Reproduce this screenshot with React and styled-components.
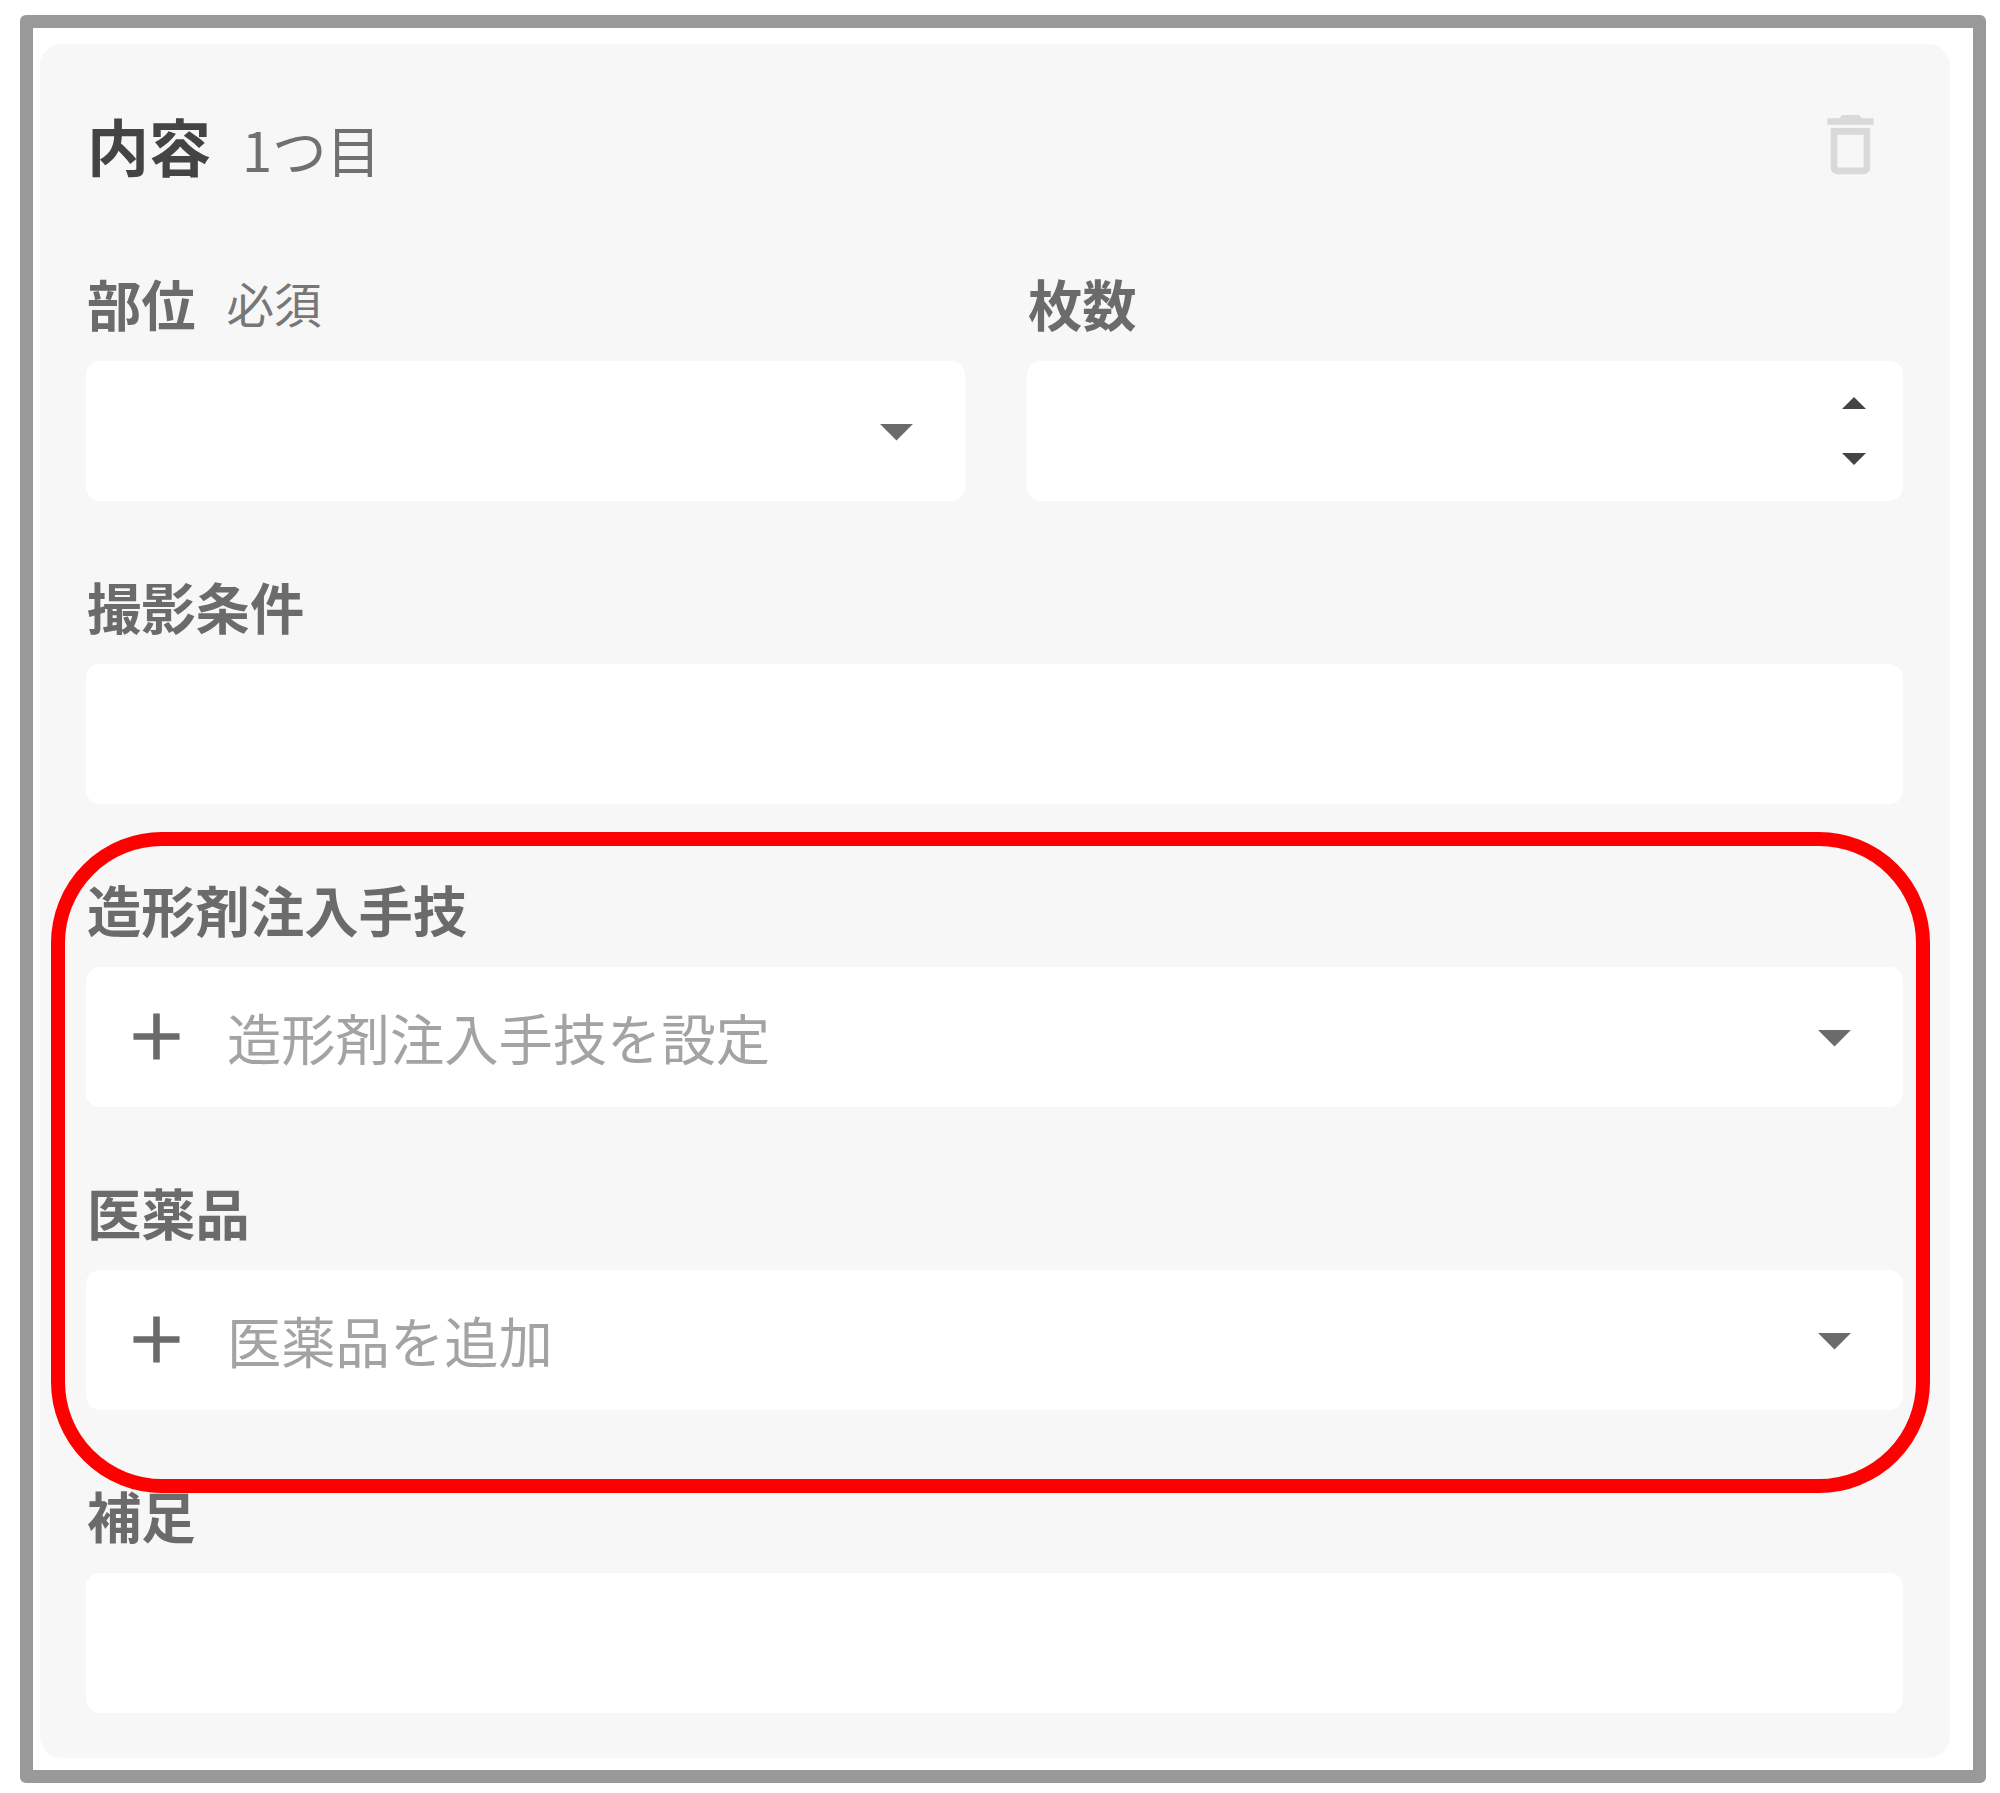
import React from "react";
import styled, { createGlobalStyle } from "styled-components";

const GlobalStyle = createGlobalStyle`
    * {
        box-sizing: border-box;
    }
    body {
        margin: 0;
        background: #fff;
        font-family: "Noto Sans CJK JP", sans-serif;
    }
`;

const Page = styled.main`
    width: 2000px;
    height: 1793px;
    padding: 15px 14px 10px 20px;
    overflow: hidden;
`;

const Frame = styled.div`
    height: 1768px;
    padding: 16px 23px 12px 7px;
    border: 13.5px solid #999;
    border-radius: 6px;
`;

const Card = styled.section`
    position: relative;
    height: 100%;
    padding: 61px 46px 0;
    border-radius: 22px;
    background: #f7f7f7;
`;

const Header = styled.header`
    display: flex;
    justify-content: space-between;
    height: 157.5px;
    padding-right: 14px;
`;

const Heading = styled.div`
    display: flex;
    align-items: baseline;
    gap: 31px;
    height: 81px;
    padding-left: 1px;
    line-height: 81px;
`;

const Title = styled.h2`
    margin: 0;
    color: #444;
    font-size: 62px;
    font-weight: 700;
`;

const Count = styled.span`
    color: #707070;
    font-size: 54.3px;
`;

const Form = styled.div`
    display: grid;
    grid-template-columns: 879px 876px;
    column-gap: 62px;
    row-gap: 65px;
`;

const FieldBox = styled.div`
    grid-column: ${({ $wide }) => ($wide ? "1 / -1" : "auto")};
`;

const Label = styled.div`
    display: flex;
    align-items: center;
    gap: 31px;
    height: 80px;
    margin-bottom: 18.5px;
    padding-left: 1px;
    color: #6b6b6b;
    font-size: 54.3px;
    font-weight: 700;
    line-height: 80px;
`;

const Required = styled.span`
    color: #777;
    font-size: 47.5px;
    font-weight: 400;
`;

const Control = styled.div`
    display: flex;
    align-items: center;
    height: 139.5px;
    padding: 0 29px 0 31px;
    border-radius: 14px;
    background: #fff;
`;

const Placeholder = styled.span`
    flex: 1;
    margin-left: 31px;
    color: #a3a3a3;
    font-size: 54.3px;
    line-height: 80px;
`;

const Spinner = styled.div`
    display: flex;
    flex-direction: column;
    gap: 44px;
    margin: 0 8px 0 auto;
`;

const Icon = styled.svg`
    flex: none;
    width: 79px;
    height: 79px;
    fill: ${({ $color }) => $color || "#6b6b6b"};
`;

const CaretIcon = styled(Icon)`
    margin-left: auto;
`;

const SpinIcon = styled.svg`
    width: 24px;
    height: 12px;
    fill: #444;
`;

// red marker around the two picker fields
const Highlight = styled.div`
    position: absolute;
    top: 788px;
    left: 11px;
    width: 1879px;
    height: 661px;
    border: 14px solid #f00;
    border-radius: 111px;
    pointer-events: none;
`;

function Caret() {
    return (
        <CaretIcon viewBox="0 0 24 24">
            <path d="M7 10l5 5 5-5z" />
        </CaretIcon>
    );
}

function Field({ label, required, wide, children }) {
    return (
        <FieldBox $wide={wide}>
            <Label>
                {label}
                {required && <Required>必須</Required>}
            </Label>
            <Control>{children}</Control>
        </FieldBox>
    );
}

function Picker({ label, placeholder }) {
    return (
        <Field label={label} wide>
            <Icon viewBox="0 0 24 24">
                <path d="M19 13h-6v6h-2v-6H5v-2h6V5h2v6h6v2z" />
            </Icon>
            <Placeholder>{placeholder}</Placeholder>
            <Caret />
        </Field>
    );
}

function App() {
    return (
        <>
            <GlobalStyle />
            <Page>
                <Frame>
                    <Card>
                        <Header>
                            <Heading>
                                <Title>内容</Title>
                                <Count>1つ目</Count>
                            </Heading>
                            <Icon viewBox="0 0 24 24" $color="#d9d9d9">
                                <path d="M6 19c0 1.1.9 2 2 2h8c1.1 0 2-.9 2-2V7H6v12zM8 9h8v10H8V9zm7.5-5l-1-1h-5l-1 1H5v2h14V4z" />
                            </Icon>
                        </Header>
                        <Form>
                            <Field label="部位" required>
                                <Caret />
                            </Field>
                            <Field label="枚数">
                                <Spinner>
                                    <SpinIcon viewBox="0 0 24 12">
                                        <path d="M0 12L12 0l12 12z" />
                                    </SpinIcon>
                                    <SpinIcon viewBox="0 0 24 12">
                                        <path d="M0 0l12 12L24 0z" />
                                    </SpinIcon>
                                </Spinner>
                            </Field>
                            <Field label="撮影条件" wide />
                            <Picker
                                label="造形剤注入手技"
                                placeholder="造形剤注入手技を設定"
                            />
                            <Picker
                                label="医薬品"
                                placeholder="医薬品を追加"
                            />
                            <Field label="補足" wide />
                        </Form>
                        <Highlight />
                    </Card>
                </Frame>
            </Page>
        </>
    );
}

export default App;
